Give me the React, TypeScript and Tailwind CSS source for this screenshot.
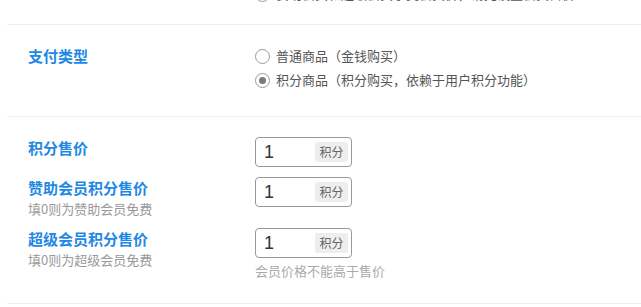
import { ReactNode } from "react";

const font = { fontFamily: '"Noto Sans CJK SC", "Noto Sans", sans-serif' };

const Radio = ({ checked, children }: { checked?: boolean; children: ReactNode }) => (
  <label className="flex items-center h-[24px] gap-[6px] text-[13px] text-[#555]">
    <span className="w-[15px] h-[15px] rounded-full border border-[#9a9a9a] bg-white flex items-center justify-center shrink-0">
      {checked && <span className="w-[7px] h-[7px] rounded-full bg-[#7a7a7a]" />}
    </span>
    <span>{children}</span>
  </label>
);

const PointInput = () => (
  <div className="w-[97px] h-[30px] border border-[#999] rounded-[4px] bg-white flex items-center justify-between pl-[8px] pr-[3px]">
    <span className="font-['Liberation_Sans',sans-serif] text-[18px] text-[#333] leading-none">1</span>
    <span className="w-[33px] h-[20px] bg-[#eeeeee] rounded-[2px] text-[12px] text-[#666] flex items-center justify-center">
      积分
    </span>
  </div>
);

const PriceRow = ({
  label,
  tip,
  hint,
}: {
  label: string;
  tip?: string;
  hint?: string;
}) => (
  <div className="flex">
    <div className="w-[227px] shrink-0">
      <div className="text-[15px] leading-[22px] font-bold text-[#1e88e5]">{label}</div>
      {tip && <div className="text-[13px] leading-[19px] text-[#999]">{tip}</div>}
    </div>
    <div>
      <PointInput />
      {hint && <div className="mt-[3px] text-[13px] leading-[20px] text-[#aaa]">{hint}</div>}
    </div>
  </div>
);

export default function App() {
  return (
    <div className="w-[641px] h-[307px] overflow-hidden bg-white pl-[7px]" style={font}>
      <section className="border-b border-[#eeeeee] pb-[18px] pl-[21px]">
        <div className="flex -mt-[18px]">
          <div className="w-[227px] shrink-0" />
          <Radio>赞助会员和超级会员享受会员价，请先设置会员售价</Radio>
        </div>
      </section>

      <section className="border-b border-[#eeeeee] pt-[19px] pb-[24px] pl-[21px] flex">
        <div className="w-[227px] shrink-0 text-[15px] leading-[24px] font-bold text-[#1e88e5]">
          支付类型
        </div>
        <div className="flex flex-col">
          <Radio>普通商品（金钱购买）</Radio>
          <Radio checked>积分商品（积分购买，依赖于用户积分功能）</Radio>
        </div>
      </section>

      <section className="border-b border-[#eeeeee] pt-[20px] pb-[22px] pl-[21px] flex flex-col gap-[10px]">
        <PriceRow label="积分售价" />
        <PriceRow label="赞助会员积分售价" tip="填0则为赞助会员免费" />
        <PriceRow label="超级会员积分售价" tip="填0则为超级会员免费" hint="会员价格不能高于售价" />
      </section>
    </div>
  );
}
